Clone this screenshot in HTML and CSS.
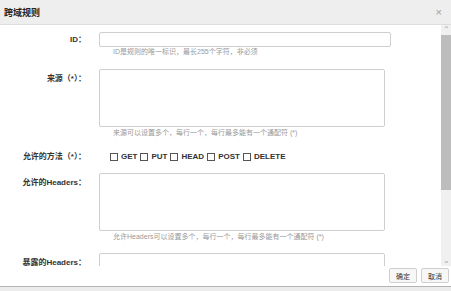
FILE: index.html
```html
<!DOCTYPE html>
<html lang="zh-CN">
<head>
  <meta charset="UTF-8">
  <title>跨域规则</title>
  <link rel="stylesheet" href="styles.css">
</head>
<body>
<div class="dialog">
  <div class="dlg-head">
    <span class="dlg-title">跨域规则</span>
    <span class="dlg-close">×</span>
  </div>
  <div class="dlg-main">
    <div class="dlg-body">
      <div class="row row-id">
        <label class="lbl lbl-mid">ID：</label>
        <div class="field">
          <input class="txt" type="text">
          <div class="tip">ID是规则的唯一标识，最长255个字符，非必须</div>
        </div>
      </div>
      <div class="row row-area">
        <label class="lbl">来源（*）：</label>
        <div class="field">
          <textarea class="area"></textarea>
          <div class="tip">来源可以设置多个，每行一个，每行最多能有一个通配符 (*)</div>
        </div>
      </div>
      <div class="row row-methods">
        <label class="lbl lbl-mid">允许的方法（*）：</label>
        <div class="methods">
          <label class="chk"><span class="box"></span>GET</label>
          <label class="chk"><span class="box"></span>PUT</label>
          <label class="chk"><span class="box"></span>HEAD</label>
          <label class="chk"><span class="box"></span>POST</label>
          <label class="chk"><span class="box"></span>DELETE</label>
        </div>
      </div>
      <div class="row row-area">
        <label class="lbl">允许的Headers：</label>
        <div class="field">
          <textarea class="area"></textarea>
          <div class="tip">允许Headers可以设置多个，每行一个，每行最多能有一个通配符 (*)</div>
        </div>
      </div>
      <div class="row row-area">
        <label class="lbl">暴露的Headers：</label>
        <div class="field">
          <textarea class="area"></textarea>
        </div>
      </div>
    </div>
    <div class="scrollbar">
      <span class="sb-arrow">&#8963;</span>
      <div class="sb-track"><div class="sb-thumb"></div></div>
      <span class="sb-arrow sb-down">&#8964;</span>
    </div>
  </div>
  <div class="dlg-foot">
    <button class="btn">确定</button>
    <button class="btn">取消</button>
  </div>
</div>
</body>
</html>
```

FILE: styles.css
```css
html, body {
  margin: 0;
  padding: 0;
}

body {
  background: #ececec;
  font-family: "Liberation Sans", "Noto Sans CJK SC", sans-serif;
  color: #333;
}

.dialog {
  width: 451px;
  height: 286px;
  background: #fff;
  border-bottom: 1px solid #b4b4b4;
  display: flex;
  flex-direction: column;
  overflow: hidden;
}

.dlg-head {
  height: 24px;
  flex: none;
  background: #eeeeee;
  border-bottom: 1px solid #dedede;
  display: flex;
  align-items: center;
  justify-content: space-between;
  padding: 0 9px 0 4px;
}

.dlg-title {
  font-size: 9px;
  font-weight: bold;
  color: #222;
}

.dlg-close {
  font-size: 11px;
  color: #a0a0a0;
}

.dlg-main {
  height: 241px;
  flex: none;
  display: flex;
}

.dlg-body {
  flex: 1;
  overflow: hidden;
  padding-top: 7px;
}

.row {
  display: flex;
  align-items: flex-start;
}

.lbl {
  width: 86px;
  margin-right: 13px;
  flex: none;
  text-align: right;
  font-size: 8px;
  font-weight: bold;
  line-height: 15px;
  padding-top: 2px;
  color: #333;
  white-space: nowrap;
}

.lbl-mid {
  padding-top: 0;
}

.field {
  display: flex;
  flex-direction: column;
}

.txt {
  width: 292px;
  height: 15px;
  box-sizing: border-box;
  border: 1px solid #cfcfcf;
  border-radius: 2px;
  margin: 0;
  padding: 0;
}

.area {
  width: 286px;
  height: 58px;
  box-sizing: border-box;
  border: 1px solid #cfcfcf;
  border-radius: 2px;
  margin: 0;
  padding: 0;
  resize: none;
}

.tip {
  font-size: 7px;
  line-height: 9px;
  color: #999;
  padding-left: 14px;
  margin-top: 1px;
  white-space: nowrap;
}

.row-id {
  margin-bottom: 13px;
}

.row-id .tip {
  margin-top: 0;
}

.row-area {
  margin-bottom: 12px;
}

.row-methods {
  height: 16px;
  margin-top: 1px;
  margin-bottom: 8px;
}

.methods {
  display: flex;
  align-items: center;
  height: 15px;
  margin-left: 11px;
  font-size: 8px;
  font-weight: bold;
  color: #333;
}

.chk {
  display: flex;
  align-items: center;
  margin-right: 3px;
}

.box {
  width: 6px;
  height: 6px;
  border: 1px solid #555;
  margin-right: 3px;
  background: #fff;
}

.scrollbar {
  width: 10px;
  flex: none;
  background: #f0f0f0;
  display: flex;
  flex-direction: column;
}

.sb-arrow {
  height: 10px;
  font-size: 8px;
  line-height: 10px;
  text-align: center;
  color: #a3a3a3;
}

.sb-track {
  flex: 1;
}

.sb-thumb {
  height: 155px;
  background: #bdbdbd;
}

.dlg-foot {
  flex: 1;
  display: flex;
  justify-content: flex-end;
  align-items: flex-start;
  padding: 2px 2px 0 0;
  gap: 4px;
}

.btn {
  height: 15px;
  width: 28px;
  padding: 0;
  border: 1px solid #cfcfcf;
  border-radius: 2px;
  background: #f7f7f7;
  font-family: "Noto Sans CJK SC", sans-serif;
  font-size: 7px;
  color: #333;
}
```
